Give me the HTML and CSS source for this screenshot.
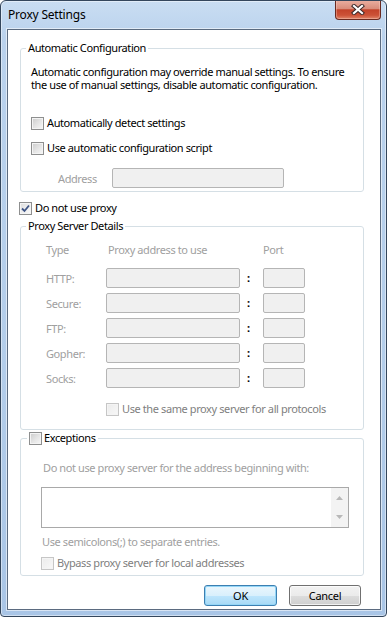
FILE: index.html
```html
<!DOCTYPE html>
<html lang="en">
<head>
  <meta charset="UTF-8">
  <title>Proxy Settings</title>
  <link rel="stylesheet" href="styles.css">
</head>
<body>
  <div class="window">
    <div class="titlebar">
      <span class="title">Proxy Settings</span>
      <div class="close">
        <svg width="14" height="11" viewBox="0 0 14 11">
          <path d="M3 2 L11 9 M11 2 L3 9" stroke="#3d2a2a" stroke-width="4.2" stroke-linecap="square"/>
          <path d="M3 2 L11 9 M11 2 L3 9" stroke="#fff" stroke-width="2.2" stroke-linecap="square"/>
        </svg>
      </div>
    </div>

    <div class="client">
      <fieldset class="group auto">
        <legend>Automatic Configuration</legend>
        <div class="gbody">
          <p class="note">
            <span class="line">Automatic configuration may override manual settings. To ensure</span>
            <span class="line">the use of manual settings, disable automatic configuration.</span>
          </p>
          <label class="check detect"><span class="cb"></span>Automatically detect settings</label>
          <label class="check script"><span class="cb"></span>Use automatic configuration script</label>
          <div class="address-row">
            <span class="dim addr-label">Address</span>
            <span class="field addr"></span>
          </div>
        </div>
      </fieldset>

      <label class="check noproxy">
        <span class="cb on">
          <svg width="11" height="11" viewBox="0 0 11 11"><path d="M2 5.5 L4.5 8 L9 2.5" fill="none" stroke="#3e5485" stroke-width="1.8"/></svg>
        </span>Do not use proxy
      </label>

      <fieldset class="group servers">
        <legend>Proxy Server Details</legend>
        <div class="gbody">
          <div class="grid">
            <span class="dim head">Type</span>
            <span class="dim head addr-head">Proxy address to use</span>
            <span></span>
            <span class="dim head">Port</span>

            <span class="dim">HTTP:</span><span class="field"></span><span class="colon">:</span><span class="field"></span>
            <span class="dim">Secure:</span><span class="field"></span><span class="colon">:</span><span class="field"></span>
            <span class="dim">FTP:</span><span class="field"></span><span class="colon">:</span><span class="field"></span>
            <span class="dim">Gopher:</span><span class="field"></span><span class="colon">:</span><span class="field"></span>
            <span class="dim">Socks:</span><span class="field"></span><span class="colon">:</span><span class="field"></span>
          </div>
          <label class="check off same"><span class="cb"></span>Use the same proxy server for all protocols</label>
        </div>
      </fieldset>

      <fieldset class="group exceptions">
        <legend><label class="check"><span class="cb"></span>Exceptions</label></legend>
        <div class="gbody">
          <p class="dim desc">Do not use proxy server for the address beginning with:</p>
          <div class="textarea">
            <div class="scroll">
              <svg width="7" height="4" viewBox="0 0 7 4"><path d="M0 4 L3.5 0 L7 4 Z" fill="#b8b8b8"/></svg>
              <svg width="7" height="4" viewBox="0 0 7 4"><path d="M0 0 L3.5 4 L7 0 Z" fill="#b8b8b8"/></svg>
            </div>
          </div>
          <p class="dim hint">Use semicolons(;) to separate entries.</p>
          <label class="check off bypass"><span class="cb"></span>Bypass proxy server for local addresses</label>
        </div>
      </fieldset>

      <div class="buttons">
        <button class="btn default">OK</button>
        <button class="btn cancel">Cancel</button>
      </div>
    </div>
  </div>
</body>
</html>
```

FILE: styles.css
```css
body {
  margin: 0;
  font-family: "Noto Sans", "Open Sans", sans-serif;
  font-size: 11px;
  letter-spacing: -0.4px;
  color: #000;
}
.window {
  width: 387px;
  height: 617px;
  box-sizing: border-box;
  border: 1px solid #34465c;
  border-radius: 6px 6px 4px 4px;
  background: linear-gradient(to bottom, #c9ddf2 0%, #bad2ed 6%, #b3cdea 60%, #a9c5e6 100%);
  box-shadow: inset 0 0 0 1px rgba(255, 255, 255, 0.45);
  overflow: hidden;
}
.titlebar {
  display: flex;
  align-items: flex-start;
  height: 28px;
}
.title {
  padding: 6px 0 0 7px;
  font-size: 12px;
  line-height: 16px;
  letter-spacing: -0.2px;
}
.close {
  margin: -1px 5px 0 auto;
  width: 46px;
  height: 20px;
  box-sizing: border-box;
  border: 1px solid #6a2a20;
  border-top: none;
  border-radius: 0 0 4px 4px;
  background: linear-gradient(to bottom, #ebb0a2 0%, #d98d7b 45%, #c3432a 52%, #cc5237 80%, #e0866a 100%);
  box-shadow: inset 0 0 0 1px rgba(255, 220, 210, 0.35);
  display: flex;
  align-items: center;
  justify-content: center;
}
.client {
  margin-left: 6px;
  width: 374px;
  height: 581px;
  box-sizing: border-box;
  border: 1px solid #5b6b80;
  background: #fff;
  padding: 11px 0 0 12px;
  box-shadow: 0 0 0 1px rgba(255, 255, 255, 0.55);
}

/* group boxes */
.group {
  margin: 0;
  padding: 0;
  width: 344px;
  box-sizing: border-box;
  border: 1px solid #d5dfe5;
  border-radius: 3px;
  min-width: 0;
}
.group legend {
  padding: 0 2px;
  margin-left: 5px;
  line-height: 14px;
}
p {
  margin: 0;
}
.note .line {
  display: block;
  height: 13px;
  line-height: 13px;
}
.dim {
  color: #a0a0a0;
}

/* checkboxes */
.check {
  display: flex;
  align-items: center;
  gap: 3px;
  height: 16px;
  line-height: 16px;
}
.cb {
  width: 13px;
  height: 13px;
  box-sizing: border-box;
  border: 1px solid #8e8f8f;
  background: linear-gradient(135deg, #cbcbcb 0%, #e6e6e6 55%, #f7f7f7 100%);
  box-shadow: inset 0 0 0 1px #f4f4f4;
  display: flex;
  align-items: center;
  justify-content: center;
  flex: none;
}
.cb.on {
  background: linear-gradient(135deg, #dcdcdc 0%, #eeeeee 55%, #fafafa 100%);
}
.off {
  color: #808080;
}
.off .cb {
  border-color: #c6c6c6;
  background: linear-gradient(135deg, #ebebeb, #f8f8f8);
}

/* automatic configuration */
.auto .gbody {
  padding: 10px 0 3px 10px;
}
.detect {
  margin-top: 24px;
}
.script {
  margin-top: 9px;
}
.address-row {
  display: flex;
  align-items: center;
  margin-top: 12px;
  height: 20px;
}
.addr-label {
  margin-left: 27px;
  width: 54px;
}
.field {
  display: block;
  height: 20px;
  box-sizing: border-box;
  border: 1px solid #b5b5b5;
  border-radius: 2px;
  background: #f0f0f0;
}
.addr {
  width: 172px;
}
.noproxy {
  margin: 8px 0 0 -1px;
}

/* proxy server details */
.servers {
  margin-top: 3px;
}
.servers .gbody {
  padding: 10px 0 12px 25px;
}
.grid {
  display: grid;
  grid-template-columns: 60px 134px 23px 42px;
  grid-template-rows: 20px repeat(5, 20px);
  row-gap: 5px;
  align-items: center;
}
.grid .head {
  align-self: start;
  line-height: 14px;
}
.addr-head {
  padding-left: 2px;
}
.colon {
  padding-left: 7px;
  font-weight: bold;
  line-height: 14px;
}
.same {
  margin: 13px 0 0 60px;
}

/* exceptions */
.exceptions legend {
  margin-left: 6px;
  line-height: 16px;
}
.exceptions legend .check {
  gap: 2px;
}
.exceptions .gbody {
  padding: 15px 0 4px 20px;
}
.desc {
  margin-left: 2px;
  line-height: 14px;
}
.textarea {
  margin-top: 12px;
  width: 308px;
  height: 41px;
  box-sizing: border-box;
  border: 1px solid #a9a9a9;
  background: #fff;
  display: flex;
  justify-content: flex-end;
}
.scroll {
  width: 17px;
  background: #f3f3f3;
  display: flex;
  flex-direction: column;
  align-items: center;
  justify-content: space-between;
  padding: 8px 0 8px;
}
.hint {
  margin: 7px 0 0 1px;
  line-height: 14px;
}
.bypass {
  margin-top: 6px;
}

/* buttons */
.buttons {
  display: flex;
  justify-content: flex-end;
  gap: 12px;
  width: 341px;
  margin-top: 9px;
}
.btn {
  width: 73px;
  height: 21px;
  box-sizing: border-box;
  border: 1px solid #707070;
  border-radius: 3px;
  background: linear-gradient(to bottom, #f2f2f2 0%, #ebebeb 50%, #dddddd 51%, #cfcfcf 100%);
  box-shadow: inset 0 0 0 1px rgba(255, 255, 255, 0.7);
  font-family: inherit;
  font-size: 11px;
  letter-spacing: -0.3px;
  color: #000;
  padding: 0;
}
.btn.cancel {
  width: 72px;
}
.btn.default {
  border-color: #3c7fb1;
  background: linear-gradient(to bottom, #eaf6fd 0%, #d9f0fc 50%, #bee6fd 51%, #a7d9f5 100%);
  box-shadow: inset 0 0 0 1px #94d6f7;
}
```
